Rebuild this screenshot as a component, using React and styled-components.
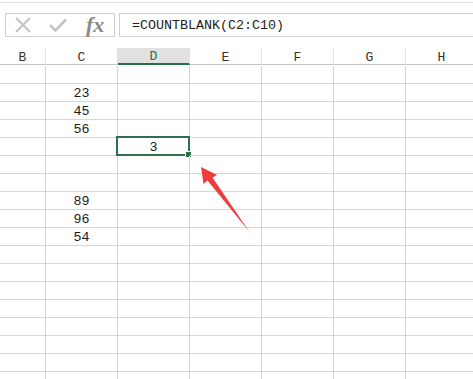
import React from 'react';
import styled, { createGlobalStyle } from 'styled-components';

const GlobalStyle = createGlobalStyle`
  html, body {
    margin: 0;
    padding: 0;
    background: #fff;
    overflow: hidden;
  }
`;

const Page = styled.div`
  width: 473px;
  height: 379px;
  overflow: hidden;
  position: relative;
  font-family: 'Liberation Mono', 'DejaVu Sans Mono', monospace;
  font-size: 13.33px;
  color: #1a1a1a;
`;

const TopStrip = styled.div`
  height: 2px;
  border-bottom: 1px solid #dcdcdc;
  margin-bottom: 10px;
`;

const FormulaBar = styled.div`
  display: flex;
  gap: 4px;
  height: 24px;
  padding-left: 5px;
  margin-bottom: 11px;
`;

const NameBox = styled.div`
  box-sizing: border-box;
  width: 110px;
  border: 1px solid #cfcfcf;
  display: flex;
  align-items: center;
  padding-left: 9px;
  gap: 18px;
`;

const Fx = styled.span`
  font-family: 'Liberation Serif', 'DejaVu Serif', serif;
  font-style: italic;
  font-weight: bold;
  font-size: 22px;
  color: #8a8a8a;
  margin-left: 1px;
  line-height: 1;
`;

const FormulaInput = styled.div`
  box-sizing: border-box;
  flex: 1;
  border: 1px solid #cfcfcf;
  border-right: none;
  display: flex;
  align-items: center;
  padding-left: 12px;
  color: #222;
`;

const Grid = styled.div`
  display: grid;
  grid-template-columns: 46px repeat(6, 72px);
  grid-auto-rows: 18px;
`;

const HeadCell = styled.div`
  box-sizing: border-box;
  height: 17px;
  display: flex;
  align-items: center;
  justify-content: center;
  border-right: 1px solid #e2e2e2;
  border-bottom: ${p => (p.$active ? '2px solid #217346' : '1px solid #c8c8c8')};
  background: ${p => (p.$active ? '#e1e1e1' : '#fff')};
  color: ${p => (p.$active ? '#217346' : '#333')};
  font-size: 13px;
  padding-top: 2px;
`;

const Cell = styled.div`
  box-sizing: border-box;
  position: relative;
  display: flex;
  align-items: center;
  justify-content: center;
  border-right: 1px solid #d6d6d6;
  border-bottom: 1px solid #d6d6d6;
  padding-top: 2px;
`;

const Selection = styled.div`
  position: absolute;
  left: -2px;
  top: -2px;
  right: -1px;
  bottom: -1px;
  border: 2px solid #2f6f4a;
  pointer-events: none;
`;

const FillHandle = styled.div`
  position: absolute;
  right: -4px;
  bottom: -4px;
  width: 5px;
  height: 5px;
  background: #2f6f4a;
  border: 1px solid #fff;
`;

const Arrow = styled.svg`
  position: absolute;
  left: 0;
  top: 0;
  pointer-events: none;
`;

const columns = ['B', 'C', 'D', 'E', 'F', 'G', 'H'];
const cValues = { 2: '23', 3: '45', 4: '56', 8: '89', 9: '96', 10: '54' };
const ROWS = 18;

export default function App() {
  const rows = [];
  for (let r = 1; r <= ROWS; r++) {
    columns.forEach(col => {
      let content = null;
      if (col === 'C' && cValues[r]) content = cValues[r];
      if (col === 'D' && r === 5) {
        content = (
          <>
            3
            <Selection>
              <FillHandle />
            </Selection>
          </>
        );
      }
      rows.push(<Cell key={col + r}>{content}</Cell>);
    });
  }

  return (
    <Page>
      <GlobalStyle />
      <TopStrip />
      <FormulaBar>
        <NameBox>
          <svg width="16" height="16" viewBox="0 0 16 16">
            <path d="M1 1 L15 15 M15 1 L1 15" stroke="#c4c4c4" strokeWidth="2" fill="none" />
          </svg>
          <svg width="18" height="14" viewBox="0 0 18 14">
            <path d="M1 7 L6.5 12.5 L17 1.5" stroke="#c4c4c4" strokeWidth="2.6" fill="none" />
          </svg>
          <Fx>fx</Fx>
        </NameBox>
        <FormulaInput>=COUNTBLANK(C2:C10)</FormulaInput>
      </FormulaBar>
      <Grid>
        {columns.map(c => (
          <HeadCell key={c} $active={c === 'D'}>{c}</HeadCell>
        ))}
        {rows}
      </Grid>
      <Arrow width="473" height="379" viewBox="0 0 473 379">
        <polygon
          points="201,167 217,175 212.5,177.5 249.5,232 207.5,180.5 203.5,184"
          fill="#ef3b3b"
        />
      </Arrow>
    </Page>
  );
}
